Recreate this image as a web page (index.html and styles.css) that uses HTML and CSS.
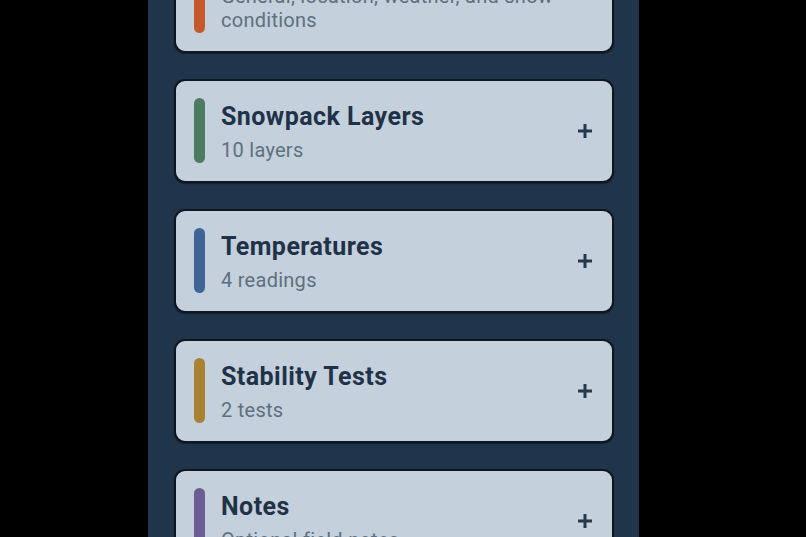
FILE: index.html
```html
<!DOCTYPE html>
<html lang="en">
<head>
<meta charset="utf-8">
<title>Observation Sections</title>
<link rel="stylesheet" href="styles.css">
</head>
<body>
<main class="column">
  <div class="list">
    <section class="card">
      <span class="bar bar-orange"></span>
      <div class="text">
        <h2 class="title">Overview</h2>
        <p class="sub">General, location, weather, and snow conditions</p>
      </div>
      <svg class="plus" viewBox="0 0 16 16" width="16" height="16"><path d="M8 1v14M1 8h14" stroke="#26384c" stroke-width="3" fill="none"/></svg>
    </section>
    <section class="card">
      <span class="bar bar-green"></span>
      <div class="text">
        <h2 class="title">Snowpack Layers</h2>
        <p class="sub">10 layers</p>
      </div>
      <svg class="plus" viewBox="0 0 16 16" width="16" height="16"><path d="M8 1v14M1 8h14" stroke="#26384c" stroke-width="3" fill="none"/></svg>
    </section>
    <section class="card">
      <span class="bar bar-blue"></span>
      <div class="text">
        <h2 class="title">Temperatures</h2>
        <p class="sub">4 readings</p>
      </div>
      <svg class="plus" viewBox="0 0 16 16" width="16" height="16"><path d="M8 1v14M1 8h14" stroke="#26384c" stroke-width="3" fill="none"/></svg>
    </section>
    <section class="card">
      <span class="bar bar-gold"></span>
      <div class="text">
        <h2 class="title">Stability Tests</h2>
        <p class="sub">2 tests</p>
      </div>
      <svg class="plus" viewBox="0 0 16 16" width="16" height="16"><path d="M8 1v14M1 8h14" stroke="#26384c" stroke-width="3" fill="none"/></svg>
    </section>
    <section class="card">
      <span class="bar bar-purple"></span>
      <div class="text">
        <h2 class="title">Notes</h2>
        <p class="sub">Optional field notes</p>
      </div>
      <svg class="plus" viewBox="0 0 16 16" width="16" height="16"><path d="M8 1v14M1 8h14" stroke="#26384c" stroke-width="3" fill="none"/></svg>
    </section>
  </div>
</main>
</body>
</html>
```

FILE: styles.css
```css
html, body {
  margin: 0;
  padding: 0;
  background: #000;
  height: 100%;
  overflow: hidden;
}
body {
  padding-left: 148px;
  font-family: Roboto, "Noto Sans", "Liberation Sans", sans-serif;
}
.column {
  width: 491px;
  height: 537px;
  background: #1f354b;
  box-sizing: border-box;
  padding: 0 25px 0 26px;
  overflow: hidden;
}
.list {
  margin-top: -75px;
  display: flex;
  flex-direction: column;
  gap: 26px;
}
.card {
  display: flex;
  align-items: stretch;
  gap: 16px;
  background: #c4d0db;
  border: 2px solid #10161d;
  border-radius: 11px;
  padding: 17px 19px 18px 18px;
  box-shadow: 0 1px 1px rgba(0,0,0,0.4);
}
.bar {
  width: 11px;
  flex: none;
  border-radius: 6px;
}
.bar-orange { background: #c6592b; }
.bar-green { background: #4b7b61; }
.bar-blue { background: #3f6496; }
.bar-gold { background: #a9812f; }
.bar-purple { background: #6b5c93; }
.text {
  flex: 1;
  padding: 4px 0 1px;
  min-width: 0;
}
.title {
  margin: 0 0 6px;
  font-size: 25px;
  line-height: 30px;
  font-weight: 700;
  letter-spacing: 0.45px;
  color: #1f3248;
}
.sub {
  margin: 0;
  font-size: 20px;
  line-height: 24px;
  letter-spacing: 0.27px;
  color: #5e6f80;
}
.plus {
  flex: none;
  align-self: center;
}
```
